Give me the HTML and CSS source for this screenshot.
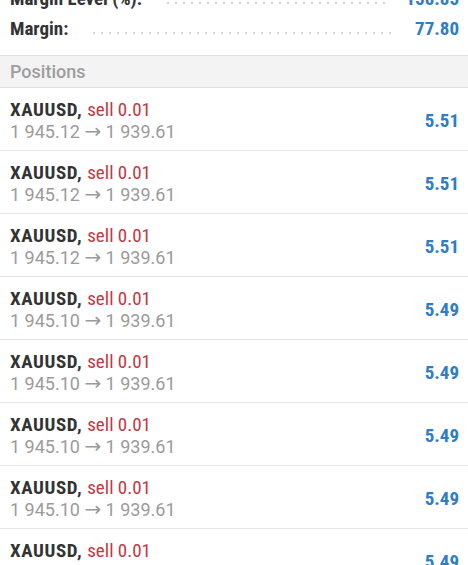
FILE: index.html
```html
<!DOCTYPE html>
<html lang="en">
<head>
    <meta charset="UTF-8">
    <meta name="viewport" content="width=device-width, initial-scale=1.0">
    <title>Trade</title>
    <link rel="stylesheet" href="styles.css">
</head>
<body>

<div class="summary">
    <div class="summary-row">
        <span class="label">Margin Level (%):</span>
        <span class="dots"></span>
        <span class="amount">158.85</span>
    </div>
    <div class="summary-row">
        <span class="label">Margin:</span>
        <span class="dots"></span>
        <span class="amount">77.80</span>
    </div>
</div>

<div class="section-title">Positions</div>

<div class="positions">
    <div class="position">
        <div class="info">
            <div class="symbol">XAUUSD, <span class="sell">sell 0.01</span></div>
            <div class="prices">1 945.12 <span class="arrow">&rarr;</span> 1 939.61</div>
        </div>
        <div class="profit">5.51</div>
    </div>
    <div class="position">
        <div class="info">
            <div class="symbol">XAUUSD, <span class="sell">sell 0.01</span></div>
            <div class="prices">1 945.12 <span class="arrow">&rarr;</span> 1 939.61</div>
        </div>
        <div class="profit">5.51</div>
    </div>
    <div class="position">
        <div class="info">
            <div class="symbol">XAUUSD, <span class="sell">sell 0.01</span></div>
            <div class="prices">1 945.12 <span class="arrow">&rarr;</span> 1 939.61</div>
        </div>
        <div class="profit">5.51</div>
    </div>
    <div class="position">
        <div class="info">
            <div class="symbol">XAUUSD, <span class="sell">sell 0.01</span></div>
            <div class="prices">1 945.10 <span class="arrow">&rarr;</span> 1 939.61</div>
        </div>
        <div class="profit">5.49</div>
    </div>
    <div class="position">
        <div class="info">
            <div class="symbol">XAUUSD, <span class="sell">sell 0.01</span></div>
            <div class="prices">1 945.10 <span class="arrow">&rarr;</span> 1 939.61</div>
        </div>
        <div class="profit">5.49</div>
    </div>
    <div class="position">
        <div class="info">
            <div class="symbol">XAUUSD, <span class="sell">sell 0.01</span></div>
            <div class="prices">1 945.10 <span class="arrow">&rarr;</span> 1 939.61</div>
        </div>
        <div class="profit">5.49</div>
    </div>
    <div class="position">
        <div class="info">
            <div class="symbol">XAUUSD, <span class="sell">sell 0.01</span></div>
            <div class="prices">1 945.10 <span class="arrow">&rarr;</span> 1 939.61</div>
        </div>
        <div class="profit">5.49</div>
    </div>
    <div class="position">
        <div class="info">
            <div class="symbol">XAUUSD, <span class="sell">sell 0.01</span></div>
            <div class="prices">1 945.10 <span class="arrow">&rarr;</span> 1 939.61</div>
        </div>
        <div class="profit">5.49</div>
    </div>
</div>

</body>
</html>
```

FILE: styles.css
```css
body {
    font-family: Roboto, "Liberation Sans", sans-serif;
    background-color: #fff;
    margin: 0;
    overflow: hidden;
}

.summary {
    margin-top: -16px;
    padding: 0 9px 11px 10px;
    border-bottom: 1px solid #e2e2e2;
}

.summary-row {
    display: flex;
    align-items: baseline;
    height: 30px;
    line-height: 30px;
}

.label {
    font-size: 19px;
    font-weight: bold;
    font-stretch: semi-condensed;
    color: #333;
}

.dots {
    flex: 1;
    height: 4px;
    margin: 0 18px 0 22px;
    background-image: radial-gradient(circle, #d4d4d4 0.9px, transparent 1.3px);
    background-size: 8px 4px;
    background-repeat: repeat-x;
}

.amount {
    font-size: 19px;
    font-weight: bold;
    font-stretch: semi-condensed;
    color: #2f7dc4;
}

.section-title {
    background-color: #f3f3f3;
    border-bottom: 1px solid #e0e0e0;
    height: 31px;
    line-height: 31px;
    padding-left: 10px;
    font-size: 18px;
    font-weight: 500;
    color: #9d9d9d;
}

.position {
    display: flex;
    align-items: center;
    justify-content: space-between;
    height: 62px;
    padding: 0 9px 0 10px;
    border-bottom: 1px solid #e4e4e4;
}

.info {
    padding-top: 3px;
}

.symbol {
    font-size: 19px;
    font-weight: bold;
    font-stretch: semi-condensed;
    letter-spacing: 0.6px;
    color: #333;
    line-height: 22px;
}

.sell {
    font-weight: normal;
    letter-spacing: 0;
    color: #c63640;
}

.prices {
    font-size: 18px;
    color: #9b9b9b;
    line-height: 22px;
}

.arrow {
    font-family: "DejaVu Sans", sans-serif;
    font-size: 20px;
    line-height: 18px;
}

.profit {
    font-size: 19px;
    font-weight: bold;
    font-stretch: semi-condensed;
    color: #2f7dc4;
    padding-top: 2px;
}
```
